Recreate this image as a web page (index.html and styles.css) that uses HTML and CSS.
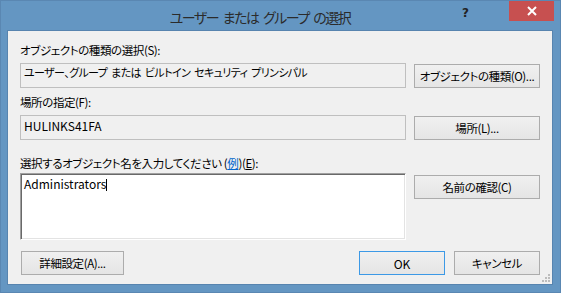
FILE: index.html
```html
<!DOCTYPE html>
<html lang="ja">
<head>
    <meta charset="UTF-8">
    <link rel="stylesheet" href="styles.css">
    <title>ユーザー または グループ の選択</title>
</head>
<body>
    <div class="window">
        <div class="titlebar">
            <div class="title">ユーザー または グループ の選択</div>
            <div class="help">?</div>
            <div class="close">
                <svg width="10" height="10" viewBox="0 0 10 10">
                    <path d="M1 1 L9 9 M9 1 L1 9" stroke="#fff" stroke-width="2"/>
                </svg>
            </div>
        </div>
        <div class="client">
            <div class="label first">オブジェクトの種類の選択(S):</div>
            <div class="row">
                <div class="field kana">ユーザー、グループ または ビルトイン セキュリティ プリンシパル</div>
                <button class="btn side">オブジェクトの種類(O)...</button>
            </div>

            <div class="label">場所の指定(F):</div>
            <div class="row">
                <div class="field latin">HULINKS41FA</div>
                <button class="btn side">場所(L)...</button>
            </div>

            <div class="label third">選択するオブジェクト名を入力してください (<a href="#" class="link">例</a>)(<u>E</u>):</div>
            <div class="row">
                <div class="editbox latin">Administrators<span class="caret"></span></div>
                <button class="btn side check">名前の確認(C)</button>
            </div>

            <div class="bottom">
                <button class="btn advanced">詳細設定(A)...</button>
                <div class="spacer"></div>
                <button class="btn ok">OK</button>
                <button class="btn cancel">キャンセル</button>
            </div>
            <svg class="grip" width="9" height="9" viewBox="0 0 9 9">
                <rect x="6" y="0" width="2" height="2" fill="#bcbcbc"/>
                <rect x="3" y="3" width="2" height="2" fill="#bcbcbc"/>
                <rect x="6" y="3" width="2" height="2" fill="#bcbcbc"/>
                <rect x="0" y="6" width="2" height="2" fill="#bcbcbc"/>
                <rect x="3" y="6" width="2" height="2" fill="#bcbcbc"/>
                <rect x="6" y="6" width="2" height="2" fill="#bcbcbc"/>
            </svg>
        </div>
    </div>
</body>
</html>
```

FILE: styles.css
```css
*{
    margin: 0;
    padding: 0;
    box-sizing: border-box;
}
body{
    width: 561px;
    height: 293px;
    overflow: hidden;
    font-family: "Noto Sans CJK JP", "Noto Sans", sans-serif;
    font-feature-settings: "palt";
    font-size: 11.5px;
    letter-spacing: -0.4px;
    color: #000;
}
.window{
    width: 561px;
    height: 293px;
    background: #6496c2;
    border: 1px solid #5a87b2;
    padding: 0 7px 7px 6px;
}
.titlebar{
    height: 29px;
    position: relative;
    display: flex;
    justify-content: center;
    align-items: center;
    padding-right: 40px;
}
.title{
    font-size: 14px;
    color: #2b2b2b;
    letter-spacing: -1.5px;
    word-spacing: 3px;
    padding-top: 3px;
}
.help{
    position: absolute;
    left: 455px;
    top: 5px;
    font-family: "DejaVu Sans", sans-serif;
    font-weight: bold;
    font-size: 12px;
    color: #222;
}
.close{
    position: absolute;
    left: 502px;
    top: 0;
    width: 45px;
    height: 20px;
    background: #c75050;
    display: flex;
    justify-content: center;
    align-items: center;
}
.client{
    position: relative;
    width: 546px;
    height: 255px;
    background: #f0f0f0;
    border: 1px solid #5784af;
    padding: 0 12px;
}
.label{
    height: 16px;
    line-height: 16px;
    margin-top: 6px;
    margin-bottom: 5px;
    white-space: nowrap;
}
.label.first{
    margin-top: 11px;
}
.label.third{
    margin-top: 15px;
    margin-bottom: 2px;
}
.link{
    color: #0066cc;
}
.row{
    display: flex;
    align-items: flex-start;
}
.field{
    width: 386px;
    height: 25px;
    border: 1px solid #bfbfbf;
    padding: 0 3px;
    line-height: 15px;
    white-space: nowrap;
    overflow: hidden;
}
.kana{
    font-size: 11px;
    letter-spacing: -0.6px;
    word-spacing: 2px;
    padding-top: 1px;
}
.latin{
    font-size: 12px;
    letter-spacing: 0;
    padding-top: 2px;
}
.editbox{
    width: 386px;
    height: 67px;
    background: #fff;
    border: 1px solid;
    border-color: #a0a0a0 #ffffff #ffffff #a0a0a0;
    box-shadow: inset 1px 1px 0 #696969, inset -1px -1px 0 #e3e3e3;
    padding: 2px 3px 0;
    line-height: 16px;
}
.caret{
    display: inline-block;
    width: 1px;
    height: 12px;
    background: #000;
    vertical-align: -2px;
}
.btn{
    font-family: inherit;
    font-size: 11.5px;
    letter-spacing: -0.4px;
    font-feature-settings: "palt";
    color: #000;
    height: 24px;
    border: 1px solid #acacac;
    background: linear-gradient(#f0f0f0, #e5e5e5);
    white-space: nowrap;
}
.side{
    width: 126px;
    margin-left: 8px;
    margin-top: 1px;
}
.check{
    margin-top: 2px;
}
.bottom{
    display: flex;
    margin-top: 11px;
}
.advanced{
    width: 103px;
    margin-left: 1px;
}
.spacer{
    flex: 1;
}
.ok{
    width: 86px;
    border-color: #3c99e6;
    letter-spacing: 0;
    font-size: 12px;
}
.cancel{
    width: 86px;
    margin-left: 9px;
}
.grip{
    position: absolute;
    right: 1px;
    bottom: 1px;
}
```
